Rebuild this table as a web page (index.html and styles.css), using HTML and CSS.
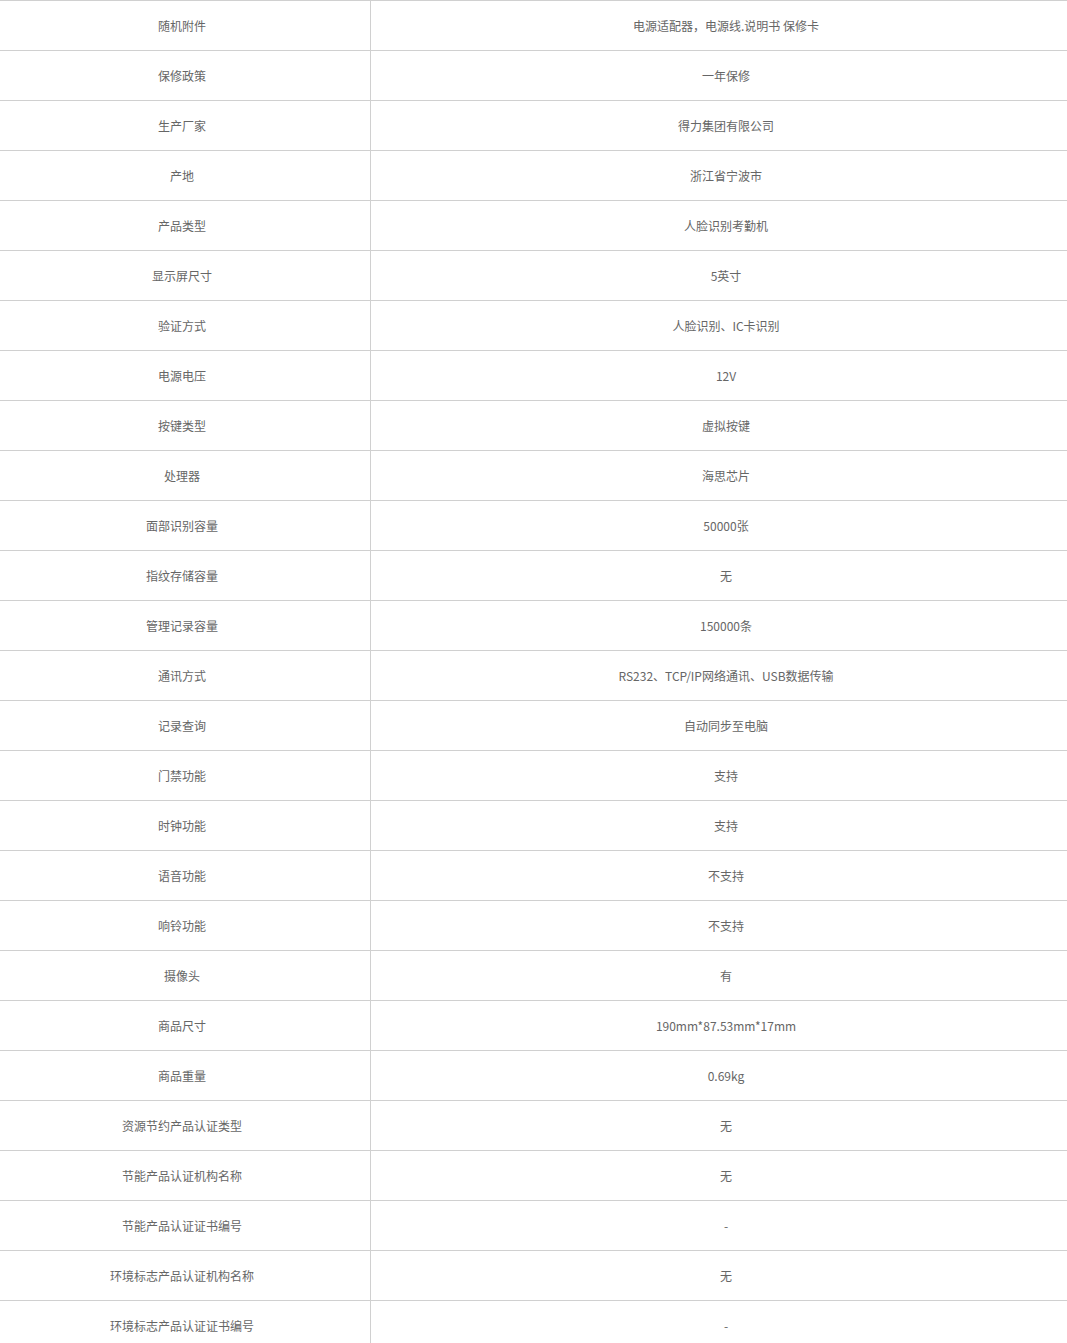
FILE: index.html
```html
<!DOCTYPE html>
<html lang="zh-CN">
<head>
<meta charset="utf-8">
<title>参数</title>
<link rel="stylesheet" href="styles.css">
</head>
<body>
<table class="spec">
<tbody>
<tr><td class="k">随机附件</td><td class="v">电源适配器，电源线.说明书 保修卡</td></tr>
<tr><td class="k">保修政策</td><td class="v">一年保修</td></tr>
<tr><td class="k">生产厂家</td><td class="v">得力集团有限公司</td></tr>
<tr><td class="k">产地</td><td class="v">浙江省宁波市</td></tr>
<tr><td class="k">产品类型</td><td class="v">人脸识别考勤机</td></tr>
<tr><td class="k">显示屏尺寸</td><td class="v">5英寸</td></tr>
<tr><td class="k">验证方式</td><td class="v">人脸识别、IC卡识别</td></tr>
<tr><td class="k">电源电压</td><td class="v">12V</td></tr>
<tr><td class="k">按键类型</td><td class="v">虚拟按键</td></tr>
<tr><td class="k">处理器</td><td class="v">海思芯片</td></tr>
<tr><td class="k">面部识别容量</td><td class="v">50000张</td></tr>
<tr><td class="k">指纹存储容量</td><td class="v">无</td></tr>
<tr><td class="k">管理记录容量</td><td class="v">150000条</td></tr>
<tr><td class="k">通讯方式</td><td class="v">RS232、TCP/IP网络通讯、USB数据传输</td></tr>
<tr><td class="k">记录查询</td><td class="v">自动同步至电脑</td></tr>
<tr><td class="k">门禁功能</td><td class="v">支持</td></tr>
<tr><td class="k">时钟功能</td><td class="v">支持</td></tr>
<tr><td class="k">语音功能</td><td class="v">不支持</td></tr>
<tr><td class="k">响铃功能</td><td class="v">不支持</td></tr>
<tr><td class="k">摄像头</td><td class="v">有</td></tr>
<tr><td class="k">商品尺寸</td><td class="v">190mm*87.53mm*17mm</td></tr>
<tr><td class="k">商品重量</td><td class="v">0.69kg</td></tr>
<tr><td class="k">资源节约产品认证类型</td><td class="v">无</td></tr>
<tr><td class="k">节能产品认证机构名称</td><td class="v">无</td></tr>
<tr><td class="k">节能产品认证证书编号</td><td class="v">-</td></tr>
<tr><td class="k">环境标志产品认证机构名称</td><td class="v">无</td></tr>
<tr><td class="k">环境标志产品认证证书编号</td><td class="v">-</td></tr>
</tbody>
</table>
</body>
</html>
```
FILE: styles.css
```css
html, body {
  margin: 0;
  padding: 0;
  background: #fff;
}
body {
  font-family: "Noto Sans CJK SC", "Noto Sans", sans-serif;
  font-size: 12px;
  color: #666;
  overflow: hidden;
}
.spec {
  border-collapse: collapse;
  table-layout: fixed;
  width: 1067px;
}
.spec td {
  height: 49px;
  padding: 0;
  text-align: center;
  vertical-align: middle;
  border-top: 1px solid #d0d0d0;
  line-height: 16px;
}
.spec .k {
  width: 364px;
  padding-right: 6px;
  border-right: 1px solid #d0d0d0;
}
.spec .v {
  padding-left: 14px;
}
```
